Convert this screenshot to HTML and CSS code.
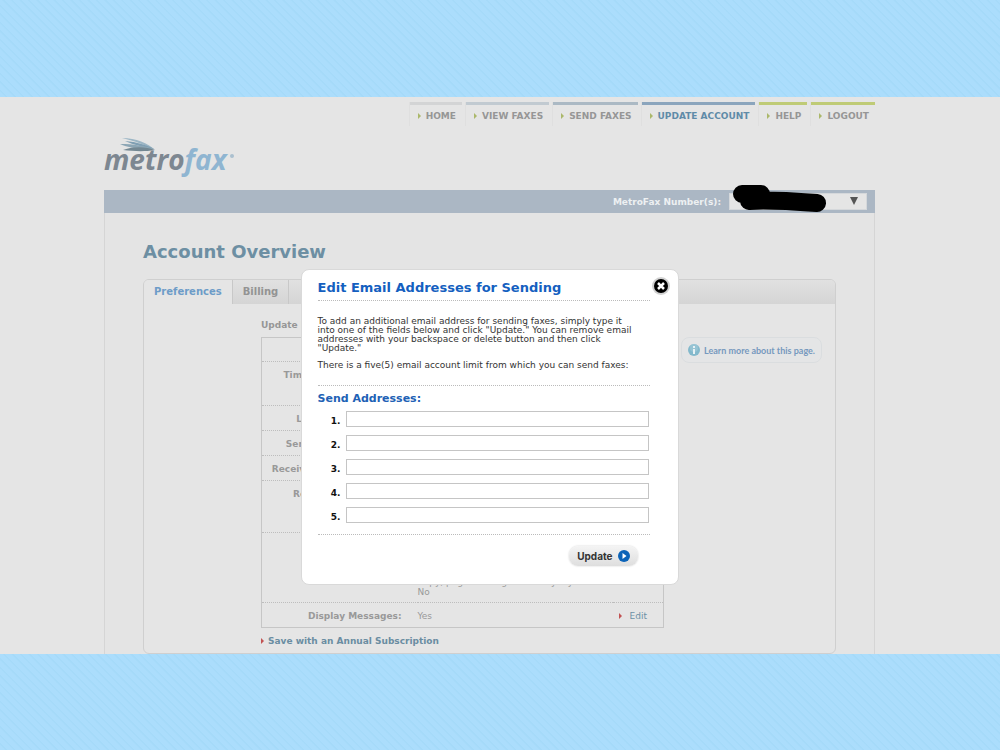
FILE: index.html
```html
<!DOCTYPE html>
<html lang="en">
<head>
<meta charset="utf-8">
<title>MetroFax - Account Overview</title>
<link rel="stylesheet" href="styles.css">
</head>
<body>
<div class="page">
  <div class="container">
    <nav class="nav">
      <a class="nav-link tone-1" href="#">HOME</a>
      <a class="nav-link tone-2" href="#">VIEW FAXES</a>
      <a class="nav-link tone-3" href="#">SEND FAXES</a>
      <a class="nav-link tone-4" href="#">UPDATE ACCOUNT</a>
      <a class="nav-link tone-5" href="#">HELP</a>
      <a class="nav-link tone-5" href="#">LOGOUT</a>
    </nav>
    <svg class="logo" width="134" height="46" viewBox="0 0 134 46" role="img" aria-label="metrofax">
      <path fill="#9cb6c5" d="M18 4C32 4 44 9 51 16C41 11 31 7 18 4Z"/>
      <path fill="#7f9fb3" d="M21 7C33 8 43 11 50 15C39 13 30 11 21 7Z"/>
      <path fill="#8ca6b5" d="M16 10C29 10 42 12 50 15C37 16 25 14 16 10Z"/>
      <path fill="#738792" d="M19 16C31 12 42 13 51 16C39 18 29 17 19 16Z"/>
      <text class="logo-text" x="0" y="36"><tspan fill="#7d8791">metro</tspan><tspan fill="#8fb5d1">fax</tspan></text>
      <circle cx="128" cy="22" r="2" fill="#abc0cf"/>
    </svg>
    <div class="number-bar">
      <label for="number">MetroFax Number(s):</label>
      <div class="number-field">
        <select id="number" class="number-select"><option></option></select>
        <svg class="number-arrow" width="8" height="8" viewBox="0 0 8 8"><path fill="#555" d="M0 0H8L4 8Z"/></svg>
        <svg class="scribble" width="96" height="30" viewBox="0 0 96 30">
          <path d="M11 10H30M18 17C30 16 58 17 86 19" fill="none" stroke="#000" stroke-width="18" stroke-linecap="round" stroke-linejoin="round"/>
        </svg>
      </div>
    </div>
    <main class="frame">
      <h1 class="heading">Account Overview</h1>
      <section class="panel">
        <div class="tabs">
          <button class="tab tab-active" type="button">Preferences</button>
          <button class="tab" type="button">Billing</button>
        </div>
        <div class="panel-body">
          <div class="settings">
            <h2 class="subheading">Update Preferences</h2>
            <table class="table">
              <tr class="row-s"><th></th><td></td><td></td></tr>
              <tr class="row-m"><th>Time Zone and Format:</th><td></td><td></td></tr>
              <tr class="row-s"><th>Login Information &amp;:</th><td></td><td></td></tr>
              <tr class="row-s"><th>Send Email Addresses:</th><td></td><td></td></tr>
              <tr class="row-s"><th>Receive Email Addresses:</th><td></td><td></td></tr>
              <tr class="row-l"><th>Receive Fax Formats:</th><td></td><td></td></tr>
              <tr class="row-xl"><th></th><td>Copy, page sending is done by my:<br>No</td><td></td></tr>
              <tr class="row-s"><th>Display Messages:</th><td>Yes</td><td class="action"><a class="edit" href="#">Edit</a></td></tr>
            </table>
            <a class="save" href="#">Save with an Annual Subscription</a>
          </div>
          <a class="learn" href="#">
            <svg width="12" height="12" viewBox="0 0 12 12"><circle cx="6" cy="6" r="6" fill="#83b9cc"/><circle cx="6" cy="4" r="4" fill="#a3ccd8" opacity=".6"/><path d="M5 2H7V4H5ZM5 5H7V10H5Z" fill="#e8f2f5"/></svg>
            Learn more about this page.
          </a>
        </div>
      </section>
    </main>
    <form class="dialog" role="dialog" aria-labelledby="dialog-title">
      <button class="close" type="button" aria-label="Close">
        <svg width="18" height="18" viewBox="0 0 18 18"><circle cx="9" cy="9" r="9" fill="#d2d2d2"/><circle cx="9" cy="9" r="7" fill="#000"/><path d="M6 6L12 12M12 6L6 12" stroke="#fff" stroke-width="2.500"/></svg>
      </button>
      <h2 class="dialog-title" id="dialog-title">Edit Email Addresses for Sending</h2>
      <div class="dialog-copy">
        <p>To add an additional email address for sending faxes, simply type it<br>into one of the fields below and click "Update." You can remove email<br>addresses with your backspace or delete button and then click<br>"Update."</p>
        <p>There is a five(5) email account limit from which you can send faxes:</p>
      </div>
      <h3 class="dialog-subtitle">Send Addresses:</h3>
      <div class="fields">
        <div class="field"><label for="a1">1.</label><input id="a1" type="text"></div>
        <div class="field"><label for="a2">2.</label><input id="a2" type="text"></div>
        <div class="field"><label for="a3">3.</label><input id="a3" type="text"></div>
        <div class="field"><label for="a4">4.</label><input id="a4" type="text"></div>
        <div class="field"><label for="a5">5.</label><input id="a5" type="text"></div>
      </div>
      <div class="dialog-footer">
        <button class="update" type="submit">Update
          <svg width="12" height="12" viewBox="0 0 12 12"><circle cx="6" cy="6" r="6" fill="#0b63b8"/><path d="M4.500 3L8.500 6L4.500 9Z" fill="#fff"/></svg>
        </button>
      </div>
    </form>
  </div>
</div>
</body>
</html>
```

FILE: styles.css
```css
* { box-sizing: border-box; }

body {
  margin: 0;
  min-height: 100vh;
  display: flex;
  flex-direction: column;
  padding: 97px 0;
  background: repeating-linear-gradient(45deg, #abddfc 0, #abddfc 4px, #a5daf9 5px, #a5daf9 6px);
  font: 9px/12px "DejaVu Sans", Verdana, sans-serif;
  color: #999;
}

h1, h2, h3, p { margin: 0; }
a { text-decoration: none; }
button { font-family: inherit; border: 0; cursor: pointer; }

.page {
  flex: 1;
  display: flex;
  justify-content: center;
  padding: 5px 21px 0 0;
  background: #e5e5e5;
}

.container {
  position: relative;
  display: flex;
  flex-direction: column;
  width: 100%;
  max-width: 771px;
}

.nav {
  display: flex;
  justify-content: flex-end;
  gap: 4px;
}

.nav-link {
  position: relative;
  height: 24px;
  padding: 5px 6px 0 16px;
  border-top: 3px solid;
  font-size: 9px;
  font-weight: bold;
  color: #969696;
  box-shadow: -1px 0 #dfdfdf;
}

.nav-link::before {
  content: "";
  position: absolute;
  left: 8px;
  top: 8px;
  border: 3px solid transparent;
  border-left-color: #abb86b;
  border-right: 0;
}

.tone-1 { border-top-color: #d3d4d5; }
.tone-2 { border-top-color: #c1cad1; }
.tone-3 { border-top-color: #abb9c4; }
.tone-4 { border-top-color: #8ba5bd; color: #5f8ba8; }
.tone-5 { border-top-color: #bfcb76; }

.logo { margin: 8px 0 10px; }
.logo-text { font: italic bold 28px "Open Sans", sans-serif; }

.number-bar {
  display: flex;
  align-items: center;
  justify-content: flex-end;
  gap: 8px;
  height: 23px;
  padding-right: 8px;
  background: #abb7c4;
  color: #edf0f2;
  font-size: 9px;
  font-weight: bold;
}

.number-field { position: relative; width: 138px; height: 17px; }
.number-select {
  appearance: none;
  display: block;
  width: 100%;
  height: 100%;
  border: 1px solid #d5d8db;
  background: #e5e5e5;
}
.number-arrow { position: absolute; right: 9px; top: 4px; }
.scribble { position: absolute; left: 2px; top: -9px; }

.frame {
  flex: 1;
  padding: 28px 38px 0;
  border: solid #d5d5d5;
  border-width: 0 1px;
  background: #e4e4e4;
}

.heading {
  margin-bottom: 16px;
  font-size: 18px;
  line-height: 22px;
  color: #6d8fa3;
}

.panel {
  border: 1px solid #cfcfcf;
  border-radius: 6px;
  background: #e5e5e5;
  overflow: hidden;
}

.tabs {
  display: flex;
  height: 24px;
  background: linear-gradient(#e1e1e1, #d5d5d5);
}

.tab {
  padding: 0 10px 2px;
  border-right: 1px solid #c8c8c8;
  background: none;
  font-size: 10px;
  font-weight: bold;
  color: #939393;
}
.tab-active { background: #e5e5e5; color: #6d9cc8; }

.panel-body {
  display: flex;
  align-items: flex-start;
  gap: 17px;
  padding: 15px 13px 6px 117px;
}

.settings { flex: 1; }

.subheading { margin-bottom: 6px; font-size: 9px; color: #969696; }

.table {
  width: 100%;
  border: 1px solid #c6c6c6;
  border-collapse: collapse;
  margin-bottom: 7px;
}
.table th, .table td { padding: 7px 16px 5px 0; vertical-align: top; }
.table th { width: 156px; text-align: right; white-space: nowrap; }
.table tr + tr { border-top: 1px dotted #bdbdbd; }
.row-s { height: 24px; }
.row-m { height: 44px; }
.row-l { height: 52px; }
.table .row-xl { height: 70px; }
.table .row-xl td { vertical-align: bottom; line-height: 10px; }
.table .action { text-align: right; }

.edit { color: #6d91a5; }
.edit::before, .save::before {
  content: "";
  display: inline-block;
  margin-right: 8px;
  border: 3px solid transparent;
  border-left-color: #c25252;
  border-right: 0;
}
.save { display: block; font-weight: bold; color: #6a8da2; }
.save::before { margin-right: 4px; }

.learn {
  display: flex;
  align-items: center;
  gap: 4px;
  height: 26px;
  margin-top: 18px;
  padding: 0 6px;
  border: 1px solid #dadddf;
  border-radius: 8px;
  background: #e4e5e6;
  font: bold 9px Lato, sans-serif;
  color: #7699be;
  white-space: nowrap;
}

.dialog {
  position: absolute;
  left: 50%;
  top: 167px;
  width: 378px;
  margin-left: -189px;
  padding: 10px 28px 18px 16px;
  border: 1px solid #d9d9d9;
  border-radius: 8px;
  background: #fff;
  color: #333;
}

.close {
  position: absolute;
  top: 7px;
  right: 8px;
  display: flex;
  padding: 0;
  background: none;
}

.dialog-title {
  padding-bottom: 5px;
  border-bottom: 1px dotted #bbb;
  font-size: 13px;
  line-height: 15px;
  color: #145fc0;
}

.dialog-copy {
  display: flex;
  flex-direction: column;
  gap: 8px;
  padding: 16px 0 15px;
  border-bottom: 1px dotted #bbb;
  line-height: 9px;
  white-space: nowrap;
}

.dialog-subtitle {
  padding: 6px 0 5px;
  font-size: 11px;
  line-height: 14px;
  color: #2161b5;
}

.fields {
  display: flex;
  flex-direction: column;
  gap: 8px;
  padding-bottom: 11px;
  border-bottom: 1px dotted #bbb;
}

.field {
  display: flex;
  align-items: flex-end;
  gap: 5px;
}
.field label {
  width: 23px;
  font-size: 9px;
  font-weight: bold;
  text-align: right;
  color: #111;
}
.field input {
  flex: 1;
  min-width: 0;
  height: 16px;
  margin-right: 1px;
  padding: 0 3px;
  border: 1px solid #c5c5c5;
  background: #fff;
  font: inherit;
}

.dialog-footer {
  display: flex;
  justify-content: flex-end;
  padding: 11px 12px 0 0;
}

.update {
  display: flex;
  align-items: center;
  gap: 5px;
  height: 20px;
  padding: 0 8px;
  border-radius: 9px;
  background: linear-gradient(#f4f4f4, #dedede);
  box-shadow: 0 0 2px #ccc;
  font: bold 10px Inter, sans-serif;
  color: #333;
}
```
